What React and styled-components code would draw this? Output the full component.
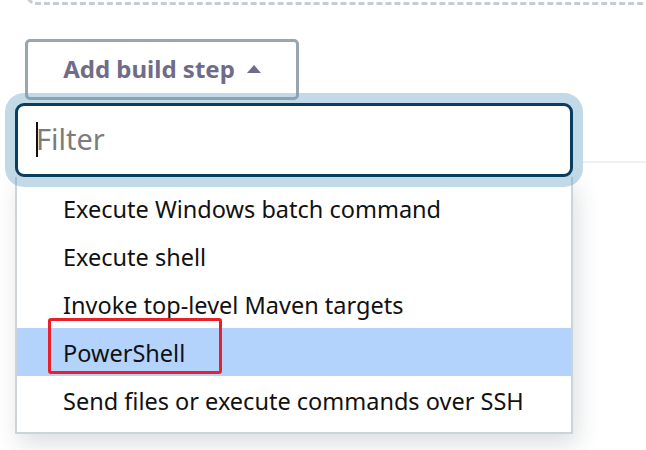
import React from 'react';
import styled, { createGlobalStyle } from 'styled-components';

const GlobalStyle = createGlobalStyle`
  html, body {
    margin: 0;
    padding: 0;
    background: #fff;
    overflow: hidden;
  }
  body {
    font-family: "Noto Sans", "Open Sans", sans-serif;
  }
`;

const Page = styled.div`
  width: 646px;
  height: 450px;
  overflow: hidden;
  display: flex;
  flex-direction: column;
`;

const DashedBox = styled.div`
  margin: -23px 0 0 26px;
  width: 700px;
  height: 22px;
  border: 3px dashed #c5cdd2;
  border-radius: 0 0 0 10px;
  flex-shrink: 0;
`;

const AddButton = styled.button`
  margin: 34px 0 0 25px;
  width: 274px;
  height: 61px;
  border: 3px solid #9aa6ae;
  border-radius: 5px;
  background: #fff;
  font-family: inherit;
  font-size: 24px;
  font-weight: 700;
  color: #6f6c88;
  display: flex;
  align-items: center;
  justify-content: center;
  gap: 12px;
  padding: 0 0 3px;
  flex-shrink: 0;
`;

const Arrow = styled.span`
  width: 0;
  height: 0;
  border-left: 7.5px solid transparent;
  border-right: 7.5px solid transparent;
  border-bottom: 8px solid currentColor;
  margin-top: 1px;
`;

const FilterRow = styled.div`
  position: relative;
  margin-top: 3px;
  padding-left: 15px;
  z-index: 2;

  &::after {
    content: '';
    position: absolute;
    left: 583px;
    right: 0;
    top: 58px;
    height: 2px;
    background: #eef0f4;
    z-index: -1;
  }
`;

const FilterField = styled.div`
  position: relative;
  width: 558px;
  height: 74px;
  box-sizing: border-box;
  border: 3px solid #0b3d5e;
  border-radius: 9px;
  background: #fff;
  box-shadow: 0 0 0 10px rgba(102, 162, 197, 0.4);
`;

const FilterInput = styled.input`
  width: 100%;
  height: 100%;
  box-sizing: border-box;
  border: none;
  outline: none;
  background: transparent;
  padding: 0 0 3px 18px;
  font-family: inherit;
  font-size: 29px;
  color: #222;

  &::placeholder {
    color: #7c7c7c;
  }
`;

const TextCaret = styled.span`
  position: absolute;
  left: 18px;
  top: 16px;
  width: 2px;
  height: 35px;
  background: #111;
`;

const Menu = styled.ul`
  position: relative;
  list-style: none;
  margin: 0 0 0 15px;
  padding: 7px 0 8px;
  width: 558px;
  box-sizing: border-box;
  background: #fff;
  border: 2px solid #cad4d9;
  border-top: none;
  box-shadow: 4px 10px 22px rgba(40, 50, 60, 0.16);
  z-index: 1;
`;

const MenuItem = styled.li`
  height: 48px;
  display: flex;
  align-items: center;
  padding: 2px 0 0 46px;
  font-size: 23.5px;
  color: #111;
  background: ${({ active }) => (active ? '#b3d3fc' : 'transparent')};
  box-sizing: border-box;
  white-space: nowrap;
`;

const Highlight = styled.span`
  position: absolute;
  left: 31px;
  top: 141px;
  width: 174px;
  height: 56px;
  box-sizing: border-box;
  border: 3px solid #e8202a;
  border-radius: 3px;
`;

const items = [
  'Execute Windows batch command',
  'Execute shell',
  'Invoke top-level Maven targets',
  'PowerShell',
  'Send files or execute commands over SSH',
];

export default function App() {
  return (
    <Page>
      <GlobalStyle />
      <DashedBox />
      <AddButton type="button">
        Add build step <Arrow />
      </AddButton>
      <FilterRow>
        <FilterField>
          <FilterInput placeholder="Filter" />
          <TextCaret />
        </FilterField>
      </FilterRow>
      <Menu>
        {items.map((label) => (
          <MenuItem key={label} active={label === 'PowerShell'}>
            {label}
          </MenuItem>
        ))}
        <Highlight />
      </Menu>
    </Page>
  );
}
